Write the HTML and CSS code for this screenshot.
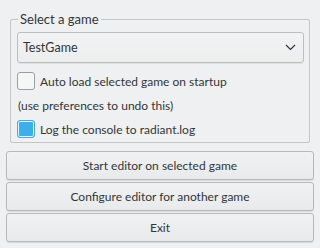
FILE: index.html
```html
<!DOCTYPE html>
<html lang="en">
<head>
  <meta charset="UTF-8" />
  <title>Select a game</title>
  <link rel="stylesheet" href="styles.css">
</head>
<body>

  <div class="dialog">
    <fieldset class="group">
      <legend>Select a game</legend>

      <div class="combo">
        <span>TestGame</span>
        <svg width="11" height="7" viewBox="0 0 11 7"><path d="M1 1 L5.5 5.5 L10 1" fill="none" stroke="#31363b" stroke-width="1.2"/></svg>
      </div>

      <label class="row">
        <span class="check"></span>
        Auto load selected game on startup
      </label>
      <div class="row note">(use preferences to undo this)</div>
      <label class="row">
        <span class="check checked"></span>
        Log the console to radiant.log
      </label>
    </fieldset>

    <button>Start editor on selected game</button>
    <button>Configure editor for another game</button>
    <button>Exit</button>
  </div>

</body>
</html>
```

FILE: styles.css
```css
body {
  margin: 0;
  background: #eff0f1;
  font-family: Lato, "Noto Sans", sans-serif;
  font-size: 12px;
  color: #31363b;
}

.dialog {
  display: flex;
  flex-direction: column;
  gap: 2px;
  padding: 10px 6px 6px;
}

.group {
  margin: 0 4px 6px;
  border: 1px solid #c3c5c7;
  border-radius: 2px;
  padding: 4px 5px 4px 6px;
  display: flex;
  flex-direction: column;
  gap: 6px;
}

.group legend {
  padding: 0 2px;
  margin-left: 1px;
  font-size: 13px;
  line-height: 18px;
}

.combo {
  height: 29px;
  border: 1px solid #bcbebf;
  border-radius: 3px;
  background: linear-gradient(#f2f3f4, #eceded);
  box-shadow: 0 1px 0 rgba(0,0,0,0.06);
  display: flex;
  align-items: center;
  justify-content: space-between;
  padding: 0 7px 0 5px;
  margin-bottom: 3px;
  font-size: 12.5px;
}

.row {
  height: 18px;
  display: flex;
  align-items: center;
  gap: 5px;
}

.check {
  width: 16px;
  height: 16px;
  border: 1px solid #9c9ea0;
  border-radius: 3px;
  background: #f5f6f6;
}

.check.checked {
  border-color: #3daee9;
  background: #3daee9;
  box-shadow: inset 0 0 0 1px #e6f3fb;
}

.note {
  padding-left: 1px;
}

button {
  height: 29px;
  font-family: inherit;
  font-size: 12px;
  color: #31363b;
  border: 1px solid #b7b9bb;
  border-radius: 3px;
  background: linear-gradient(#f0f1f2, #e9eaeb);
  box-shadow: 0 1px 1px rgba(0,0,0,0.1);
  padding: 0;
}
```
